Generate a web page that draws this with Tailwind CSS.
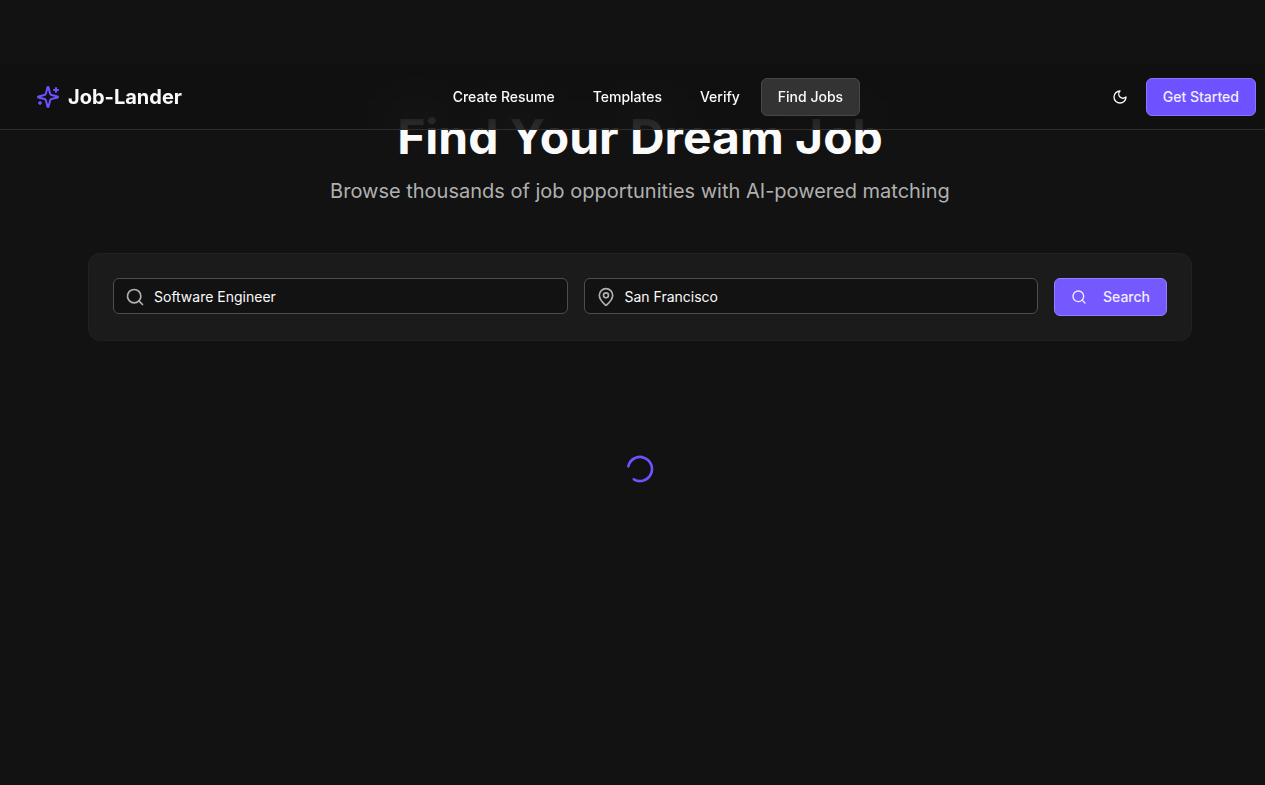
<!DOCTYPE html>
<html lang="en">
<head>
<meta charset="utf-8">
<meta name="viewport" content="width=device-width, initial-scale=1">
<title>Job-Lander</title>
<script src="https://cdn.jsdelivr.net/npm/@tailwindcss/browser@4"></script>
</head>
<body class="min-h-screen overflow-x-hidden bg-[#121212] font-[Inter,sans-serif] text-[#fafafa]">
<div class="-mr-[15px] pt-[65px]">
  <header class="relative z-10 border-b border-[#2e2e2e]">
    <div class="absolute inset-0 -z-10 bg-[#111111]/85 opacity-[0.94] backdrop-blur-xl"></div>
    <div class="flex h-16 items-center justify-between px-6">
      <a href="#" class="flex items-center gap-2 px-3 text-xl font-bold">
        <svg class="size-6 text-[#6e52ff]" viewBox="0 0 24 24" fill="none" stroke="currentColor" stroke-width="2" stroke-linecap="round" stroke-linejoin="round" aria-hidden="true"><path d="M9.937 15.5A2 2 0 0 0 8.5 14.063l-6.135-1.582a.5.5 0 0 1 0-.962L8.5 9.936A2 2 0 0 0 9.937 8.5l1.582-6.135a.5.5 0 0 1 .963 0L14.063 8.5A2 2 0 0 0 15.5 9.937l6.135 1.581a.5.5 0 0 1 0 .964L15.5 14.063a2 2 0 0 0-1.437 1.437l-1.582 6.135a.5.5 0 0 1-.963 0z"/><path d="M20 3v4M22 5h-4M4 17v2M5 18H3"/></svg>
        Job-Lander
      </a>
      <nav class="flex items-center gap-1 text-sm font-medium">
        <a href="#" class="rounded-md border border-transparent px-4 py-2">Create Resume</a>
        <a href="#" class="rounded-md border border-transparent px-4 py-2">Templates</a>
        <a href="#" class="rounded-md border border-transparent px-4 py-2">Verify</a>
        <a href="#" class="rounded-md border border-[#474747] bg-[#333333] px-4 py-2">Find Jobs</a>
      </nav>
      <div class="flex items-center gap-2">
        <button type="button" aria-label="Toggle theme" class="flex size-9 items-center justify-center rounded-md">
          <svg class="size-4" viewBox="0 0 24 24" fill="none" stroke="currentColor" stroke-width="2" stroke-linecap="round" stroke-linejoin="round" aria-hidden="true"><path d="M12 3a6 6 0 0 0 9 9 9 9 0 1 1-9-9Z"/></svg>
        </button>
        <button type="button" class="rounded-md border border-[#8a75ff] bg-[#6e52ff] px-4 py-2 text-sm font-medium text-[#f0edff]">Get Started</button>
      </div>
    </div>
  </header>
  <main class="mx-auto -mt-[17px] max-w-[1152px] px-6">
    <div class="mb-12 text-center">
      <h1 class="mb-4 text-5xl font-bold">Find Your Dream Job</h1>
      <p class="text-xl text-[#b0b0b0]">Browse thousands of job opportunities with AI-powered matching</p>
    </div>
    <form class="flex items-start gap-4 rounded-xl border border-[#212121] bg-[#1b1b1b] p-6">
      <div class="relative flex-1">
        <svg class="absolute top-[9px] left-3 size-5 text-[#b0b0b0]" viewBox="0 0 24 24" fill="none" stroke="currentColor" stroke-width="2" stroke-linecap="round" stroke-linejoin="round" aria-hidden="true"><circle cx="11" cy="11" r="8"/><path d="m21 21-4.300-4.300"/></svg>
        <input type="text" aria-label="Job title" value="Software Engineer" class="block h-9 w-full rounded-md border border-[#4d4d4d] bg-[#121212] pr-3 pl-10 text-sm">
      </div>
      <div class="relative flex-1">
        <svg class="absolute top-[9px] left-3 size-5 text-[#b0b0b0]" viewBox="0 0 24 24" fill="none" stroke="currentColor" stroke-width="2" stroke-linecap="round" stroke-linejoin="round" aria-hidden="true"><path d="M20 10c0 4.993-5.539 10.193-7.399 11.799a1 1 0 0 1-1.202 0C9.539 20.193 4 14.993 4 10a8 8 0 0 1 16 0"/><circle cx="12" cy="10" r="3"/></svg>
        <input type="text" aria-label="Location" value="San Francisco" class="block h-9 w-full rounded-md border border-[#4d4d4d] bg-[#121212] pr-3 pl-10 text-sm">
      </div>
      <button type="submit" class="flex items-center gap-4 rounded-md border border-[#9180ff] bg-[#7559ff] px-4 py-2 text-sm font-medium text-[#f0edff]">
        <svg class="size-4" viewBox="0 0 24 24" fill="none" stroke="currentColor" stroke-width="2" stroke-linecap="round" stroke-linejoin="round" aria-hidden="true"><circle cx="11" cy="11" r="8"/><path d="m21 21-4.300-4.300"/></svg>
        Search
      </button>
    </form>
    <div class="flex justify-center py-28" role="status" aria-label="Loading jobs">
      <svg class="size-8 rotate-[193deg] text-[#6e52ff]" viewBox="0 0 24 24" fill="none" stroke="currentColor" stroke-width="2" stroke-linecap="round" stroke-linejoin="round" aria-hidden="true"><path d="M21 12a9 9 0 1 1-6.219-8.560"/></svg>
    </div>
  </main>
</div>
</body>
</html>
